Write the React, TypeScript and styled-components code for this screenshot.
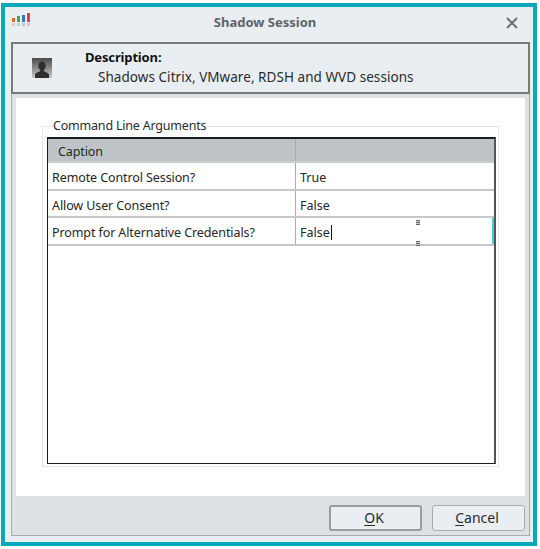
import React from 'react';
import styled, { createGlobalStyle } from 'styled-components';

const GlobalStyle = createGlobalStyle`
  html, body {
    margin: 0;
    padding: 0;
    background: #ffffff;
  }
  body {
    font-family: "Noto Sans", "Liberation Sans", sans-serif;
  }
`;

const Page = styled.div`
  width: 540px;
  height: 549px;
  padding: 3px 3px 3px 1px;
  box-sizing: border-box;
`;

const Dialog = styled.div`
  height: 100%;
  box-sizing: border-box;
  border: 4px solid #0aa9b9;
  background: #e9eef2;
  display: flex;
  flex-direction: column;
  padding: 0 3px 6px 6px;
`;

const TitleBar = styled.div`
  height: 35px;
  flex: none;
  display: flex;
  align-items: center;
  position: relative;
`;

const Title = styled.div`
  flex: 1;
  text-align: center;
  font-size: 13px;
  font-weight: 700;
  color: #5f6468;
  padding-right: 11px;
  margin-top: -6px;
`;

const Logo = styled.svg`
  position: absolute;
  left: 0;
  top: 5px;
`;

const CloseIcon = styled.svg`
  position: absolute;
  right: 12px;
  top: 10px;
`;

const DescriptionPanel = styled.div`
  height: 52px;
  flex: none;
  box-sizing: border-box;
  border: 2px solid #77797b;
  background: #e9eef2;
  display: flex;
  align-items: center;
`;

const UserBox = styled.svg`
  margin-left: 19px;
  flex: none;
`;

const DescriptionText = styled.div`
  margin-left: 33px;
  display: flex;
  flex-direction: column;
  gap: 2px;
  margin-top: -3px;
`;

const DescriptionTitle = styled.div`
  font-size: 13px;
  font-weight: 700;
  color: #111;
  letter-spacing: -0.15px;
`;

const DescriptionBody = styled.div`
  font-size: 13.5px;
  color: #2b2b2b;
  margin-left: 13px;
  letter-spacing: 0.05px;
`;

const Body = styled.div`
  flex: 1;
  display: flex;
  flex-direction: column;
  background: #dde1e4;
  border: 1px solid #a9acae;
  border-top: none;
  padding: 4px 4px 0 4px;
  min-height: 0;
`;

const Content = styled.div`
  flex: 1;
  background: #ffffff;
  padding: 20px 26px 29px 26px;
  display: flex;
  min-height: 0;
`;

const GroupBox = styled.fieldset`
  flex: 1;
  margin: 0;
  padding: 0 2px 2px 4px;
  border: 1px solid #e4e6e7;
  min-width: 0;
  display: flex;
  position: relative;
`;

const Legend = styled.legend`
  font-size: 12.5px;
  color: #2b2b2b;
  margin-left: 5px;
  padding: 0 1px;
  line-height: 16px;
  letter-spacing: -0.2px;
`;

const Grid = styled.div`
  flex: 1;
  margin-top: 3px;
  border: 1px solid #1c1c1c;
  border-top-width: 2px;
  border-right-width: 2px;
  border-right-color: #555;
  display: flex;
  flex-direction: column;
  position: relative;
  min-height: 0;
`;

const Row = styled.div<{ $header?: boolean; $h: number }>`
  display: grid;
  grid-template-columns: 247px 1fr;
  height: ${p => p.$h}px;
  flex: none;
  box-sizing: border-box;
  background: ${p => (p.$header ? '#bdc3c6' : '#ffffff')};
  border-bottom: 2px solid ${p => (p.$header ? '#c9ced0' : '#c6c9cb')};
`;

const Cell = styled.div<{ $header?: boolean }>`
  display: flex;
  align-items: center;
  padding-left: ${p => (p.$header ? '10px' : '4px')};
  padding-top: 3px;
  font-size: 12.5px;
  color: #262626;
  letter-spacing: -0.1px;
`;

const ValueCell = styled.div<{ $focused?: boolean }>`
  display: flex;
  align-items: center;
  padding-left: 4px;
  padding-top: 3px;
  font-size: 12.5px;
  color: #262626;
  border-left: 1px solid #a9acae;
  border-right: ${p => (p.$focused ? '2px solid #35d4e0' : 'none')};
`;

const Caret = styled.span`
  display: inline-block;
  width: 1px;
  height: 15px;
  background: #111;
  margin-left: 1px;
`;

const ResizeMark = styled.span<{ $top: number }>`
  position: absolute;
  left: 368px;
  top: ${p => p.$top}px;
  width: 4px;
  height: 5px;
  background: repeating-linear-gradient(#666 0 1px, #ccc 1px 2px);
`;

const Footer = styled.div`
  height: 39px;
  flex: none;
  display: flex;
  justify-content: flex-end;
  align-items: flex-start;
  gap: 10px;
  padding-top: 9px;
  box-sizing: border-box;
`;

const DialogButton = styled.button<{ $primary?: boolean }>`
  width: 93px;
  height: 26px;
  box-sizing: border-box;
  border: ${p => (p.$primary ? '2px solid #9a9d9f' : '1px solid #a9acae')};
  border-radius: 3px;
  background: #e9eef2;
  font-family: inherit;
  font-size: 14px;
  color: #2b2b2b;
  padding: 0 3px 2px 0;
  u {
    text-underline-offset: 2px;
  }
`;

export default function App() {
  return (
    <>
      <GlobalStyle />
      <Page>
        <Dialog>
          <TitleBar>
            <Logo width="20" height="16" viewBox="0 0 20 16">
              <rect x="1" y="6" width="3" height="4" fill="#e2692f" />
              <rect x="6" y="4" width="3" height="6" fill="#4aa24a" />
              <rect x="11" y="3" width="3" height="7" fill="#3a74b8" />
              <rect x="16" y="1" width="3" height="9" fill="#d8434b" />
              <rect x="1" y="11" width="3" height="3" fill="#e2692f" opacity="0.3" />
              <rect x="6" y="11" width="3" height="3" fill="#4aa24a" opacity="0.3" />
              <rect x="11" y="11" width="3" height="3" fill="#3a74b8" opacity="0.3" />
              <rect x="16" y="11" width="3" height="3" fill="#d8434b" opacity="0.3" />
            </Logo>
            <Title>Shadow Session</Title>
            <CloseIcon width="12" height="12" viewBox="0 0 12 12">
              <path d="M1 1 L11 11 M11 1 L1 11" stroke="#6f7478" strokeWidth="2.2" />
            </CloseIcon>
          </TitleBar>
          <DescriptionPanel>
            <UserBox width="20" height="20" viewBox="0 0 20 20">
              <defs>
                <linearGradient id="userBg" x1="0" y1="0" x2="0" y2="1">
                  <stop offset="0" stopColor="#4a4a4a" />
                  <stop offset="1" stopColor="#c9c9c9" />
                </linearGradient>
              </defs>
              <rect width="20" height="20" fill="url(#userBg)" />
              <path
                d="M10 3.5c2.4 0 3.7 1.9 3.7 4.2 0 1.9-1 3.5-1.9 4.3v1.3c1.6.8 4.6 1.5 5.2 3.2V20H3v-3.500c.6-1.700 3.600-2.400 5.200-3.200V12c-.9-.8-1.900-2.400-1.900-4.300C6.300 5.400 7.600 3.500 10 3.500z"
                fill="#2e2e2e"
              />
            </UserBox>
            <DescriptionText>
              <DescriptionTitle>Description:</DescriptionTitle>
              <DescriptionBody>Shadows Citrix, VMware, RDSH and WVD sessions</DescriptionBody>
            </DescriptionText>
          </DescriptionPanel>
          <Body>
            <Content>
              <GroupBox>
                <Legend>Command Line Arguments</Legend>
                <Grid>
                  <Row $header $h={24}>
                    <Cell $header>Caption</Cell>
                    <ValueCell />
                  </Row>
                  <Row $h={28}>
                    <Cell>Remote Control Session?</Cell>
                    <ValueCell>True</ValueCell>
                  </Row>
                  <Row $h={27}>
                    <Cell>Allow User Consent?</Cell>
                    <ValueCell>False</ValueCell>
                  </Row>
                  <Row $h={28}>
                    <Cell>Prompt for Alternative Credentials?</Cell>
                    <ValueCell $focused>
                      False
                      <Caret />
                    </ValueCell>
                  </Row>
                  <ResizeMark $top={81} />
                  <ResizeMark $top={102} />
                </Grid>
              </GroupBox>
            </Content>
            <Footer>
              <DialogButton $primary>
                <u>O</u>K
              </DialogButton>
              <DialogButton>
                <u>C</u>ancel
              </DialogButton>
            </Footer>
          </Body>
        </Dialog>
      </Page>
    </>
  );
}
